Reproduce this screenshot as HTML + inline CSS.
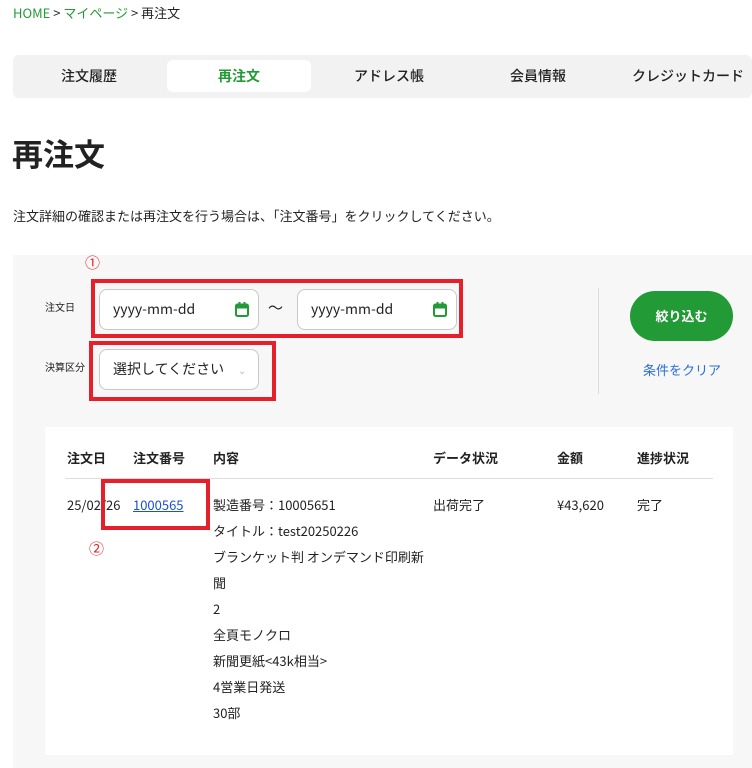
<!DOCTYPE html>
<html><head><meta charset="utf-8"><style>
*{margin:0;padding:0;box-sizing:border-box}
body{width:752px;height:768px;overflow:hidden;background:#fff;font-family:"Noto Sans CJK JP","Liberation Sans",sans-serif;color:#222;position:relative;line-height:1.3}
.a{position:absolute;white-space:nowrap}
.g{color:#229a35}
.tab{position:absolute;top:60px;height:32px;width:144px;line-height:32px;text-align:center;font-size:14px;font-weight:500}
.inp{position:absolute;height:41px;background:#fff;border:1px solid #c8c8c8;border-radius:8px;font-size:14px;line-height:39px;padding-left:13px}
.red{position:absolute;border:4px solid #e5202a}
.cal{position:absolute;right:9px;top:12px;width:14px;height:15px}
.th{position:absolute;top:450px;font-size:13px;font-weight:bold}
.td{position:absolute;font-size:13px;line-height:26px}
</style></head><body>
<div class="a" style="left:13px;top:5px;font-size:13px"><span class="g">HOME</span> &gt; <span class="g">マイページ</span> &gt; 再注文</div>
<div class="a" style="left:13px;top:55px;width:739px;height:43px;background:#f2f2f2;border-radius:6px"></div>
<div class="a" style="left:167px;top:60px;width:144px;height:32px;background:#fff;border-radius:6px"></div>
<div class="tab" style="left:17px">注文履歴</div>
<div class="tab g" style="left:167px;font-weight:bold">再注文</div>
<div class="tab" style="left:317px">アドレス帳</div>
<div class="tab" style="left:466px">会員情報</div>
<div class="tab" style="left:616px">クレジットカード</div>
<div class="a" style="left:12px;top:132px;font-size:31px;font-weight:bold;line-height:42px">再注文</div>
<div class="a" style="left:13px;top:208px;font-size:13px">注文詳細の確認または再注文を行う場合は、「注文番号」をクリックしてください。</div>
<div class="a" style="left:13px;top:255px;width:739px;height:513px;background:#f7f7f7"></div>
<div class="a" style="left:85px;top:253px;color:#e5202a;font-size:15px">①</div>
<div class="a" style="left:45px;top:300px;font-size:10px">注文日</div>
<div class="a" style="left:45px;top:360px;font-size:10px">決算区分</div>
<div class="inp" style="left:99px;top:289px;width:160px">yyyy-mm-dd<svg class="cal" viewBox="0 0 14 15"><rect x="1" y="2.5" width="12" height="11.5" rx="1.5" fill="none" stroke="#229a35" stroke-width="2"/><rect x="1" y="2.5" width="12" height="4" fill="#229a35"/><rect x="3.5" y="0" width="2" height="3" fill="#229a35"/><rect x="8.5" y="0" width="2" height="3" fill="#229a35"/></svg></div>
<div class="a" style="left:268px;top:298px;font-size:15px">〜</div>
<div class="inp" style="left:297px;top:289px;width:160px">yyyy-mm-dd<svg class="cal" viewBox="0 0 14 15"><rect x="1" y="2.5" width="12" height="11.5" rx="1.5" fill="none" stroke="#229a35" stroke-width="2"/><rect x="1" y="2.5" width="12" height="4" fill="#229a35"/><rect x="3.5" y="0" width="2" height="3" fill="#229a35"/><rect x="8.5" y="0" width="2" height="3" fill="#229a35"/></svg></div>
<div class="inp" style="left:99px;top:349px;width:160px">選択してください<span class="a" style="left:138px;top:0;color:#bbb;font-size:10px">&#8964;</span></div>
<div class="red" style="left:91px;top:279px;width:372px;height:59px"></div>
<div class="red" style="left:89px;top:341px;width:187px;height:60px"></div>
<div class="a" style="left:598px;top:288px;width:1px;height:106px;background:#ddd"></div>
<div class="a" style="left:630px;top:291px;width:103px;height:50px;background:#229a35;border-radius:25px;color:#fff;font-weight:bold;font-size:13px;text-align:center;line-height:50px">絞り込む</div>
<div class="a" style="left:643px;top:362px;font-size:13px;color:#2a6fd6">条件をクリア</div>
<div class="a" style="left:45px;top:427px;width:688px;height:328px;background:#fff"></div>
<div class="th" style="left:67px">注文日</div>
<div class="th" style="left:133px">注文番号</div>
<div class="th" style="left:213px">内容</div>
<div class="th" style="left:433px">データ状況</div>
<div class="th" style="left:557px">金額</div>
<div class="th" style="left:637px">進捗状況</div>
<div class="a" style="left:65px;top:478px;width:648px;height:1px;background:#ddd"></div>
<div class="td" style="left:67px;top:492px">25/02/26</div>
<div class="td" style="left:133px;top:492px;color:#1a4fd6;text-decoration:underline">1000565</div>
<div class="td" style="left:213px;top:492px;width:212px;white-space:normal">製造番号：10005651<br>タイトル：test20250226<br>ブランケット判 オンデマンド印刷新聞<br>2<br>全頁モノクロ<br>新聞更紙&lt;43k相当&gt;<br>4営業日発送<br>30部</div>
<div class="td" style="left:433px;top:492px">出荷完了</div>
<div class="td" style="left:557px;top:492px">¥43,620</div>
<div class="td" style="left:637px;top:492px">完了</div>
<div class="red" style="left:101px;top:479px;width:109px;height:51px"></div>
<div class="a" style="left:89px;top:539px;color:#e5202a;font-size:15px">②</div>
</body></html>
